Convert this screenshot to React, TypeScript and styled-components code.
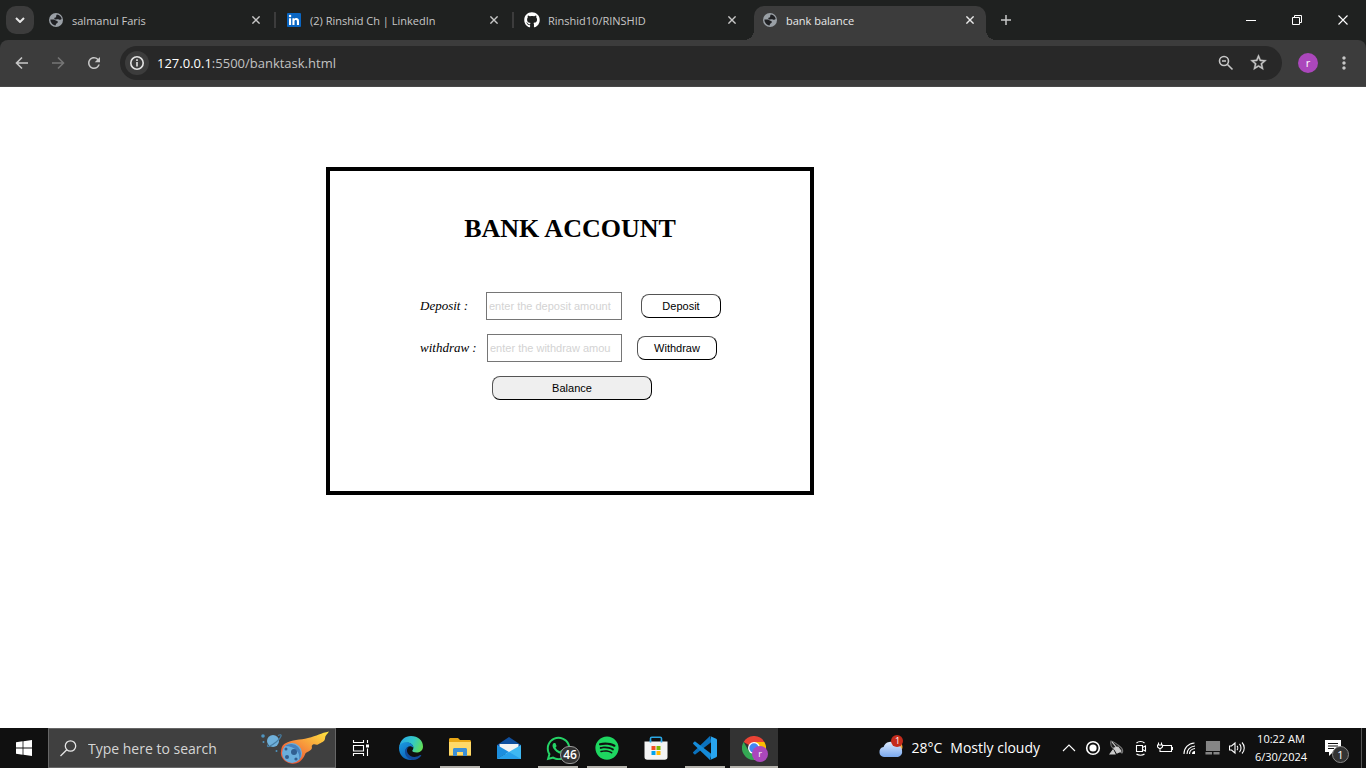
import React from "react";
import styled, { createGlobalStyle, css } from "styled-components";
import { FaGithub, FaSpotify, FaWhatsapp } from "react-icons/fa";
import { MdMoreVert, MdRefresh, MdStarOutline } from "react-icons/md";

const uiFont = `"Segoe UI", "Open Sans", "Noto Sans", sans-serif`;

const GlobalStyle = createGlobalStyle`
  *, *::before, *::after { box-sizing: border-box; }
  body { margin: 0; background: #fff; }
  button { font: inherit; color: inherit; }
  svg { display: block; flex: none; }
`;

const Screen = styled.div`
  display: flex;
  flex-direction: column;
  min-height: 100vh;
`;

/* Browser chrome */

const TabStrip = styled.header`
  display: flex;
  align-items: flex-end;
  height: 40px;
  background: #1f2120;
  color: #c7c7c7;
  font: 11px/16px ${uiFont};
`;

const IconButton = styled.button<{ $w?: number; $h?: number }>`
  display: flex;
  align-items: center;
  justify-content: center;
  flex: none;
  width: ${(p) => p.$w ?? 16}px;
  height: ${(p) => p.$h ?? 16}px;
  padding: 0;
  border: 0;
  background: transparent;
`;

const TabSearch = styled(IconButton)`
  margin: 0 6px 6px;
  border-radius: 10px;
  background: #3c3c3c;
  color: #e6e6e6;
`;

const TabList = styled.nav`
  display: flex;
  gap: 6px;
`;

const Tab = styled.div<{ $active?: boolean; $divider?: boolean }>`
  position: relative;
  display: flex;
  align-items: center;
  gap: 8px;
  width: 232px;
  height: 34px;
  padding: 0 8px 6px;
  ${(p) =>
    p.$active &&
    css`
      border-radius: 10px 10px 0 0;
      background: #3c3c3c;
      color: #e9e9e9;
      &::before,
      &::after {
        content: "";
        position: absolute;
        bottom: 0;
        width: 10px;
        height: 10px;
      }
      &::before {
        right: 100%;
        background: radial-gradient(circle at 0 0, transparent 10px, #3c3c3c 10px);
      }
      &::after {
        left: 100%;
        background: radial-gradient(circle at 100% 0, transparent 10px, #3c3c3c 10px);
      }
    `}
  ${(p) =>
    p.$divider &&
    css`
      &::after {
        content: "";
        position: absolute;
        right: -4px;
        top: 6px;
        width: 2px;
        height: 16px;
        background: #3c3c3c;
      }
    `}
`;

const TabTitle = styled.span`
  flex: 1;
  padding-top: 2px;
  overflow: hidden;
  white-space: nowrap;
`;

const WindowControls = styled.div`
  display: flex;
  align-self: stretch;
  margin-left: auto;
  color: #fff;
`;

const ToolbarBack = styled.div`
  background: #1f2120;
`;

const Toolbar = styled.div`
  display: flex;
  align-items: center;
  height: 47px;
  padding: 0 8px 1px 4px;
  border-bottom: 1px solid #484848;
  border-radius: 8px 8px 0 0;
  background: #3c3c3c;
  color: #c7c7c7;
`;

const AddressBar = styled.form`
  display: flex;
  align-items: center;
  flex: 1;
  height: 34px;
  margin-left: 8px;
  padding: 0 8px 0 5px;
  border-radius: 17px;
  background: #282828;
`;

const SiteInfo = styled(IconButton)`
  border-radius: 50%;
  background: #3c3c3c;
  color: #e3e3e3;
`;

const Address = styled.div`
  flex: 1;
  margin-left: 8px;
  color: #c3c3c3;
  font: 13px/20px ${uiFont};
  b {
    color: #fff;
    font-weight: 400;
  }
`;

const Avatar = styled.button`
  width: 20px;
  height: 20px;
  margin: 0 12px 0 16px;
  padding: 0;
  border: 0;
  border-radius: 50%;
  background: #ab47bc;
  color: #fff;
  font: 11px/18px ${uiFont};
`;

/* Bank page */

const Page = styled.main`
  flex: 1;
  padding: 80px 0 80px 326px;
  background: #fff;
`;

const Account = styled.section`
  width: 488px;
  min-height: 328px;
  padding: 43px 86px 84px 90px;
  border: 4px solid #000;
  color: #000;
`;

const Title = styled.h1`
  margin: 0 4px 48px 0;
  font: bold 26px/30px "Times New Roman", "Liberation Serif", serif;
  text-align: center;
`;

const FormRow = styled.form`
  display: flex;
  align-items: center;
  height: 28px;
  margin-bottom: 14px;
`;

const Label = styled.label<{ $w: number }>`
  width: ${(p) => p.$w}px;
  font: italic 13px/16px "Times New Roman", "Liberation Serif", serif;
`;

const Amount = styled.input<{ $w: number }>`
  width: ${(p) => p.$w}px;
  height: 28px;
  padding: 1px 10px 1px 2px;
  border: 1px solid #767676;
  border-radius: 0;
  font: 11px/14px Arial, "Liberation Sans", sans-serif;
  &::placeholder {
    color: #d3d3d3;
    opacity: 1;
  }
`;

const Action = styled.button<{ $wide?: boolean; $gap: number }>`
  width: ${(p) => (p.$wide ? 160 : 80)}px;
  height: 24px;
  margin-left: ${(p) => p.$gap}px;
  padding: 0;
  border: 1px outset #000;
  border-radius: 8px;
  background: ${(p) => (p.$wide ? "#efefef" : "#fff")};
  color: #000;
  font: 11px/14px Arial, "Liberation Sans", sans-serif;
`;

/* Taskbar */

const Taskbar = styled.footer`
  display: flex;
  align-items: stretch;
  height: 40px;
  background: #101010;
  color: #fff;
  font-family: ${uiFont};
`;

const SearchBox = styled.div`
  display: flex;
  align-items: center;
  width: 288px;
  padding: 0 5px 0 11px;
  border: 1px solid #666;
  background: #404040;
`;

const SearchInput = styled.input`
  flex: 1;
  min-width: 0;
  margin-left: 11px;
  padding: 2px 0 0;
  border: 0;
  background: transparent;
  font: 14px/20px ${uiFont};
  &::placeholder {
    color: #d5d5d5;
    opacity: 1;
  }
`;

const Apps = styled.nav`
  display: flex;
  gap: 1px;
  margin-left: 2px;
`;

const AppButton = styled.button<{ $running?: boolean; $active?: boolean }>`
  position: relative;
  display: flex;
  align-items: center;
  justify-content: center;
  width: 48px;
  height: 40px;
  padding: 0;
  border: 0;
  background: ${(p) => (p.$active ? "#333" : "transparent")};
  ${(p) =>
    (p.$running || p.$active) &&
    css`
      &::after {
        content: "";
        position: absolute;
        inset: auto ${p.$active ? 0 : 4}px 0;
        height: 2px;
        background: #b5b3ad;
      }
    `}
`;

const Count = styled.span`
  position: absolute;
  left: 26px;
  top: 18px;
  width: 20px;
  height: 18px;
  border: 1px solid #999;
  border-radius: 9px;
  background: #333;
  font: 600 12px/16px ${uiFont};
  text-align: center;
`;

const Profile = styled.span`
  position: absolute;
  left: 22px;
  top: 18px;
  width: 16px;
  height: 16px;
  border-radius: 50%;
  background: #ab47bc;
  font: 9px/15px ${uiFont};
  text-align: center;
`;

const Weather = styled.button`
  display: flex;
  align-items: center;
  gap: 8px;
  margin-left: auto;
  margin-right: 17px;
  padding: 0;
  border: 0;
  background: transparent;
  font: 14px/20px ${uiFont};
`;

const WeatherIcon = styled.span`
  position: relative;
  width: 24px;
`;

const Alert = styled.span`
  position: absolute;
  left: 12px;
  top: -4px;
  width: 12px;
  height: 12px;
  border-radius: 50%;
  background: #c42b1c;
  font: 9px/12px ${uiFont};
  text-align: center;
`;

const Clock = styled.time`
  width: 64px;
  padding-top: 2px;
  font: 11px/18px ${uiFont};
  text-align: center;
  white-space: nowrap;
`;

const Notifications = styled.button`
  position: relative;
  display: flex;
  align-items: center;
  width: 49px;
  margin-right: 4px;
  padding: 0 12px;
  border: 0;
  border-right: 1px solid #555;
  background: transparent;
`;

const NotificationCount = styled.span`
  position: absolute;
  left: 19px;
  top: 18px;
  width: 17px;
  height: 17px;
  border: 1px solid #888;
  border-radius: 50%;
  background: #333;
  font: 11px/15px ${uiFont};
  text-align: center;
`;

const Line = ({ d, color = "currentColor", children }: { d: string; color?: string; children?: React.ReactNode }) => (
  <svg width="16" height="16" viewBox="0 0 16 16" fill="none" stroke={color} strokeWidth="1.600">
    <path d={d} />
    {children}
  </svg>
);

const Globe = () => (
  <svg width="16" height="16" viewBox="0 0 16 16">
    <circle cx="8" cy="8" r="7" fill="#9aa0a6" />
    <path d="M9 2.4c2.500.3 4.300 2 4.700 4.600-.8.900-1.900 1-2.900.4-.8-.5-1.900-.2-2.700.1-.9.2-1.900-.2-1.800-1.100 0-.9 1.100-.7 1.700-1.400.5-.8-.2-1.900 1-2.600zM2.400 7.600h3.300c1.200 0 1.600 1 2.700 1.100 1.100 0 1.600.8 1.300 1.700-.2.800-1.400.9-1.700 1.700-.2.600-.1 1.200-.6 1.400-2.800-.4-5-2.800-5-5.900z" fill="#202124" />
  </svg>
);

const LinkedIn = () => (
  <svg width="16" height="16" viewBox="0 0 16 16">
    <rect x="1" y="1" width="14" height="14" rx="1" fill="#0a66c2" />
    <path d="M3 6.200h2.100V13H3zM6.400 6.200h2v.9c.8-1.500 4.600-1.700 4.600 1.800V13h-2.100V9.500c0-2-2.400-1.900-2.400 0V13H6.400z" fill="#fff" />
    <circle cx="4.050" cy="4" r="1.250" fill="#fff" />
  </svg>
);

const Cross = ({ size = 8, width = 1.4 }: { size?: number; width?: number }) => (
  <svg width={size} height={size} viewBox="0 0 8 8" stroke="currentColor" strokeWidth={width}>
    <path d="M.4.4l7.200 7.200M7.600.4L.4 7.600" />
  </svg>
);

const Comet = () => (
  <svg width="70" height="36" viewBox="0 0 70 36">
    <defs>
      <linearGradient id="tail" x1="0" x2="1" y1="1" y2="0">
        <stop offset="0.2" stopColor="#ef5a35" />
        <stop offset="0.55" stopColor="#f79a3c" />
        <stop offset="1" stopColor="#ffe93f" />
      </linearGradient>
    </defs>
    <circle cx="3" cy="6" r="1.800" fill="#4f93bd" />
    <circle cx="3.500" cy="12" r="1" fill="#4f93bd" />
    <circle cx="16.500" cy="21" r="1" fill="#4f93bd" />
    <circle cx="13" cy="11" r="6" fill="#6fb0da" />
    <path d="M18 5.500c5-2.600 3.600 2-1.500 6.200S5.500 18.600 8 14.500" fill="none" stroke="#467ea4" strokeWidth="1.200" />
    <path d="M25 13.500c7-4 15-3.500 23-5.500 9-2 13-5 21-6.500-2 3-4 4-4 7 0 3-4 4-7 6-2 1-3-1-5 0-3 2 1 3-3 6-2 2-4 1-5 4-3 7-8 10-14 9-7-1-11-7-10-12 .500-4 1-6 4-8z" fill="url(#tail)" />
    <circle cx="32" cy="23" r="10" fill="#6aaedd" />
    <path d="M25 16a10 10 0 0114 14c2-7-4-14-14-14z" fill="#4781bd" />
    <g fill="#315f91">
      <circle cx="34" cy="22" r="3" />
      <circle cx="26" cy="19" r="1.500" />
      <circle cx="27" cy="27" r="2" />
      <circle cx="36" cy="29" r="1.600" />
    </g>
  </svg>
);

const TaskView = () => (
  <svg width="18" height="16" viewBox="0 0 18 16" fill="none" stroke="#fff" strokeWidth="1.100">
    <path d="M1.500 0v2.500h10V0M1.500 16v-2.500h10V16M1.500 5.500h10v5.500h-10zM15.500 0v3M15.500 8.500V16" />
    <path d="M14 4.500h3v3h-3z" fill="#fff" stroke="none" />
  </svg>
);

const Edge = () => (
  <svg width="24" height="24" viewBox="0 0 24 24">
    <defs>
      <linearGradient id="edgeTop" x1="0" x2="1" y1="0.300" y2="0.600">
        <stop offset="0" stopColor="#2aa9e8" />
        <stop offset="0.550" stopColor="#33c9c6" />
        <stop offset="1" stopColor="#62df54" />
      </linearGradient>
      <linearGradient id="edgeBody" x1="0" x2="0.600" y1="0" y2="1">
        <stop offset="0" stopColor="#1b9de2" />
        <stop offset="1" stopColor="#0c62b8" />
      </linearGradient>
    </defs>
    <path d="M.2 10.500C1.500 4 6 0 12 0c7 0 12 4.500 12 10.500 0 4-3.200 6-6.500 6-2.500 0-4.200-.7-4.200-1.700 0-.7 1.100-1.300 1.100-3 0-2.800-2.800-5-6-5-3.600 0-6.600 1.800-8.200 3.700z" fill="url(#edgeTop)" />
    <path d="M0 12c0-4 3.600-6.300 8.400-5.800 3.300.3 6 2.700 6 5.500-1-.9-2-1.500-3.400-1.500-2.800 0-4.400 2.200-4.400 5 0 4 3.400 7.400 7.700 8.500C6 25.300 0 19.500 0 12z" fill="url(#edgeBody)" />
    <path d="M9.700 11c-1.900 1.500-2.200 4-1 6.200 1.700 3 5.700 4.500 9.200 3.300 1.800-.6 3.100-1.800 4-1.600.5.100.4.600.1 1-2.100 2.800-5 4.100-7.700 4.100C9 23.500 5.600 19.600 6 15c.2-2 1.700-3.700 3.700-4z" fill="#114a9b" />
  </svg>
);

const Explorer = () => (
  <svg width="22" height="20" viewBox="0 0 22 20">
    <path d="M0 1.500C0 .6.600 0 1.500 0H9l2 2h9.500c.9 0 1.500.6 1.500 1.500V17.500H0z" fill="#e9a715" />
    <path d="M0 4h22v13.500H0z" fill="#ffd968" />
    <path d="M4 18v-6.500c0-.9.600-1.500 1.500-1.500h11c.9 0 1.500.6 1.500 1.500V18h-4v-4H8v4z" fill="#3b8fd6" />
  </svg>
);

const Mail = () => (
  <svg width="24" height="24" viewBox="0 0 24 24">
    <path d="M0 9L12 1l12 8v3H0z" fill="#0f4f9e" />
    <path d="M2.500 8h19v8l-9.500 3-9.500-3z" fill="#f3f3f3" />
    <path d="M0 9l12 7-12 7z" fill="#1c8ede" />
    <path d="M24 9v14H0z" fill="#3fb8f2" />
    <path d="M12 16l12 7H0z" fill="#28a0ea" />
  </svg>
);

const Store = () => (
  <svg width="24" height="24" viewBox="0 0 24 24">
    <path d="M6.500 7V2.500c0-.8.500-1.300 1.300-1.300h8.400c.8 0 1.300.5 1.300 1.300V7" fill="none" stroke="#2aa7e4" strokeWidth="1.600" />
    <path d="M.5 5.500h23V21c0 1.700-1 2.700-2.700 2.700H3.200C1.500 23.700.5 22.700.5 21z" fill="#f4f4f4" />
    <path d="M5.700 6.500v-2h1.600v2zM16.700 6.500v-2h1.600v2z" fill="#2aa7e4" />
    <path d="M7.500 10h4v4h-4z" fill="#f25022" />
    <path d="M12.500 10h4v4h-4z" fill="#7fba00" />
    <path d="M7.500 15h4v4h-4z" fill="#00a4ef" />
    <path d="M12.500 15h4v4h-4z" fill="#ffb900" />
  </svg>
);

const VSCode = () => (
  <svg width="24" height="24" viewBox="0 0 24 24">
    <path d="M17 0l1.500 6L2.500 18.300c-.4.300-.8.300-1.200 0L.3 17.300c-.4-.4-.4-.9 0-1.300z" fill="#0b72bd" />
    <path d="M17 24l1.500-6L2.500 5.700c-.4-.3-.8-.3-1.200 0L.3 6.700c-.4.400-.4.900 0 1.300z" fill="#158bd8" />
    <path d="M17 0l6.200 2.800c.5.200.8.700.8 1.200v16c0 .5-.3 1-.8 1.200L17 24c-.5.100-.8 0-1.200-.4.900.7 2.200 0 2.200-1.100v-21C18 .400 16.700-.300 15.800.4 16.200 0 16.500-.1 17 0z" fill="#28a5f0" />
  </svg>
);

const Chrome = () => (
  <svg width="24" height="24" viewBox="0 0 24 24">
    <path d="M12 12L1.600 6A12 12 0 0122.400 6z" fill="#ea4335" />
    <path d="M12 12V6h10.400A12 12 0 0112 24z" fill="#fbbc04" />
    <path d="M12 12l5.200 3L12 24A12 12 0 011.600 6l5.200 9z" fill="#34a853" />
    <circle cx="12" cy="12" r="6" fill="#fff" />
    <circle cx="12" cy="12" r="4.700" fill="#4285f4" />
  </svg>
);

const Cloud = () => (
  <svg width="24" height="18" viewBox="0 0 24 18">
    <defs>
      <linearGradient id="cloud" x1="0" x2="0" y1="0" y2="1">
        <stop offset="0" stopColor="#dcebff" />
        <stop offset="1" stopColor="#79a8ee" />
      </linearGradient>
    </defs>
    <circle cx="18" cy="8" r="5.500" fill="#f2a63a" />
    <path d="M5 18a5 5 0 01-.4-9.900A6.700 6.700 0 0117 6.300a6 6 0 012 11.700z" fill="url(#cloud)" />
  </svg>
);

const trayIcons: { name: string; art: React.ReactNode }[] = [
  { name: "Show hidden icons", art: <path d="M2 11l6-6 6 6" /> },
  {
    name: "Recorder",
    art: (
      <>
        <circle cx="8" cy="8" r="6.300" strokeWidth="1.600" />
        <circle cx="8" cy="8" r="3.600" fill="#fff" stroke="none" />
      </>
    ),
  },
  {
    name: "Satellite",
    art: (
      <>
        <path d="M2 1c-1 4 1 8 7 10l4 2c2-3-1-6-4-8S4 1 2 1z" stroke="#777" fill="#222" />
        <path d="M1 14l3-4 2 4zM5 8l4-1 3 4-4 2z" fill="#ccc" stroke="#ccc" />
        <path d="M3 2l5 6" stroke="#ddd" />
      </>
    ),
  },
  { name: "Meet now", art: <path d="M3.500 5.500h6v6h-6zM9.500 7.500l3-1.500v5l-3-1.500M3.500 3c2-2 6-2 8 0M3.500 14c2 1.600 6 1.600 8 0" /> },
  { name: "Battery", art: <path d="M6 5.500h8.500v6H5M15.500 7v3M.5 5h5v2L3 9 .5 7zM3 8v3.500h3M1.500 5V2.500M4.500 5V2.500" /> },
  {
    name: "Wi-Fi",
    art: (
      <>
        <path d="M3 14C3 8 7 3.500 13.500 3M6 14c0-4 3-7.500 8-8M8.500 14c0-3 2-5 5.500-5.500" />
        <path d="M11 14c0-2 1-3 3-3v3z" fill="#fff" stroke="none" />
      </>
    ),
  },
  { name: "Network", art: <path d="M1.500 1.500h13v9h-13zM1 12.500h5.500V14H1zM9 12.500h5V14H9z" fill="#858585" stroke="#858585" /> },
  { name: "Volume", art: <path d="M.5 6h2L6 3v10l-3.500-3h-2zM8 6c1 1 1 3 0 4M10.500 4c2 2 2 6 0 8M13 2.500c3 3 3 8 0 11" /> },
];

const apps: { name: string; icon: React.ReactNode; running?: boolean; active?: boolean }[] = [
  { name: "Edge", icon: <Edge /> },
  { name: "File Explorer", icon: <Explorer />, running: true },
  { name: "Mail", icon: <Mail /> },
  {
    name: "WhatsApp",
    icon: (
      <>
        <FaWhatsapp size={27} color="#25d366" />
        <Count>46</Count>
      </>
    ),
    running: true,
  },
  { name: "Spotify", icon: <FaSpotify size={24} color="#1ed760" />, running: true },
  { name: "Store", icon: <Store /> },
  { name: "Visual Studio Code", icon: <VSCode />, running: true },
  {
    name: "Chrome",
    icon: (
      <>
        <Chrome />
        <Profile>r</Profile>
      </>
    ),
    active: true,
  },
];

const tabs: { title: string; icon: React.ReactNode; active?: boolean; divider?: boolean }[] = [
  { title: "salmanul Faris", icon: <Globe />, divider: true },
  { title: "(2) Rinshid Ch | LinkedIn", icon: <LinkedIn />, divider: true },
  { title: "Rinshid10/RINSHID", icon: <FaGithub size={16} color="#fff" /> },
  { title: "bank balance", icon: <Globe />, active: true },
];

const hold = (e: React.FormEvent) => e.preventDefault();

export default function App() {
  return (
    <Screen>
      <GlobalStyle />
      <TabStrip>
        <TabSearch $w={28} $h={28} aria-label="Search tabs">
          <svg width="10" height="6" viewBox="0 0 10 6" fill="none" stroke="currentColor" strokeWidth="2">
            <path d="M1 1l4 4 4-4" />
          </svg>
        </TabSearch>
        <TabList>
          {tabs.map((t) => (
            <Tab key={t.title} $active={t.active} $divider={t.divider}>
              {t.icon}
              <TabTitle>{t.title}</TabTitle>
              <IconButton aria-label="Close tab">
                <Cross />
              </IconButton>
            </Tab>
          ))}
        </TabList>
        <IconButton $w={40} $h={40} aria-label="New tab">
          <svg width="10" height="10" viewBox="0 0 10 10" stroke="#c7c7c7" strokeWidth="1.500">
            <path d="M5 0v10M0 5h10" />
          </svg>
        </IconButton>
        <WindowControls>
          <IconButton $w={46} $h={40} aria-label="Minimize">
            <svg width="10" height="10" viewBox="0 0 10 10" stroke="currentColor">
              <path d="M0 5.500h10" />
            </svg>
          </IconButton>
          <IconButton $w={46} $h={40} aria-label="Restore">
            <svg width="10" height="10" viewBox="0 0 10 10" fill="none" stroke="currentColor">
              <path d="M.5 2.500h7v7h-7zM2.500 2.500v-2h7v7h-2" />
            </svg>
          </IconButton>
          <IconButton $w={46} $h={40} aria-label="Close">
            <Cross size={10} width={0.9} />
          </IconButton>
        </WindowControls>
      </TabStrip>
      <ToolbarBack>
        <Toolbar>
          <IconButton $w={36} $h={34} aria-label="Back">
            <Line d="M14 8H3M8 2.500L2.500 8 8 13.500" />
          </IconButton>
          <IconButton $w={36} $h={34} aria-label="Forward">
            <Line d="M2 8h11M8 2.500L13.500 8 8 13.500" color="#757575" />
          </IconButton>
          <IconButton $w={36} $h={34} aria-label="Reload">
            <MdRefresh size={18} />
          </IconButton>
          <AddressBar onSubmit={hold}>
            <SiteInfo $w={24} $h={24} type="button" aria-label="Site information">
              <Line d="M8 7v4.500M8 4.300v1.600">
                <circle cx="8" cy="8" r="6.200" />
              </Line>
            </SiteInfo>
            <Address>
              <b>127.0.0.1</b>:5500/banktask.html
            </Address>
            <IconButton $w={32} $h={32} type="button" aria-label="Zoom">
              <Line d="M9.500 9.500L14.500 14.500M4 6h4">
                <circle cx="6" cy="6" r="4.500" />
              </Line>
            </IconButton>
            <IconButton $w={32} $h={32} type="button" aria-label="Bookmark">
              <MdStarOutline size={19} stroke="currentColor" strokeWidth={0.5} />
            </IconButton>
          </AddressBar>
          <Avatar>r</Avatar>
          <IconButton $w={28} $h={32} aria-label="Menu">
            <MdMoreVert size={20} />
          </IconButton>
        </Toolbar>
      </ToolbarBack>

      <Page>
        <Account>
          <Title>BANK ACCOUNT</Title>
          <FormRow onSubmit={hold}>
            <Label $w={66} htmlFor="deposit">Deposit :</Label>
            <Amount $w={136} id="deposit" inputMode="numeric" placeholder="enter the deposit amount" />
            <Action $gap={19}>Deposit</Action>
          </FormRow>
          <FormRow onSubmit={hold}>
            <Label $w={67} htmlFor="withdraw">withdraw :</Label>
            <Amount $w={135} id="withdraw" inputMode="numeric" placeholder="enter the withdraw amount" />
            <Action $gap={15}>Withdraw</Action>
          </FormRow>
          <Action $wide $gap={72}>Balance</Action>
        </Account>
      </Page>

      <Taskbar>
        <IconButton $w={48} $h={40} aria-label="Start">
          <svg width="16" height="16" viewBox="0 0 16 16" fill="#fff">
            <path d="M0 2.200l6.600-.9v6.300H0zM7.400 1.200L16 0v7.600H7.400zM0 8.400h6.600v6.300L0 13.800zM7.400 8.400H16V16l-8.600-1.200z" />
          </svg>
        </IconButton>
        <SearchBox>
          <svg width="17" height="17" viewBox="0 0 17 17" fill="none" stroke="#e5e5e5" strokeWidth="1.300">
            <circle cx="10.500" cy="6" r="5.200" />
            <path d="M6.800 9.700L.5 16" />
          </svg>
          <SearchInput aria-label="Search" placeholder="Type here to search" />
          <Comet />
        </SearchBox>
        <IconButton $w={49} $h={40} aria-label="Task view">
          <TaskView />
        </IconButton>
        <Apps>
          {apps.map((a) => (
            <AppButton key={a.name} aria-label={a.name} $running={a.running} $active={a.active}>
              {a.icon}
            </AppButton>
          ))}
        </Apps>
        <Weather>
          <WeatherIcon>
            <Cloud />
            <Alert>1</Alert>
          </WeatherIcon>
          <span>28°C</span>
          <span>Mostly cloudy</span>
        </Weather>
        {trayIcons.map((t) => (
          <IconButton key={t.name} $w={24} $h={40} aria-label={t.name}>
            <svg width="16" height="16" viewBox="0 0 16 16" fill="none" stroke="#fff" strokeWidth="1.100">
              {t.art}
            </svg>
          </IconButton>
        ))}
        <Clock>
          10:22 AM
          <br />
          6/30/2024
        </Clock>
        <Notifications aria-label="Notifications">
          <svg width="16" height="16" viewBox="0 0 16 16">
            <path d="M0 0h16v12H8l-4 4v-4H0z" fill="#fff" />
            <path d="M3 3.500h10M3 6h10M3 8.500h6" stroke="#101010" />
          </svg>
          <NotificationCount>1</NotificationCount>
        </Notifications>
      </Taskbar>
    </Screen>
  );
}
